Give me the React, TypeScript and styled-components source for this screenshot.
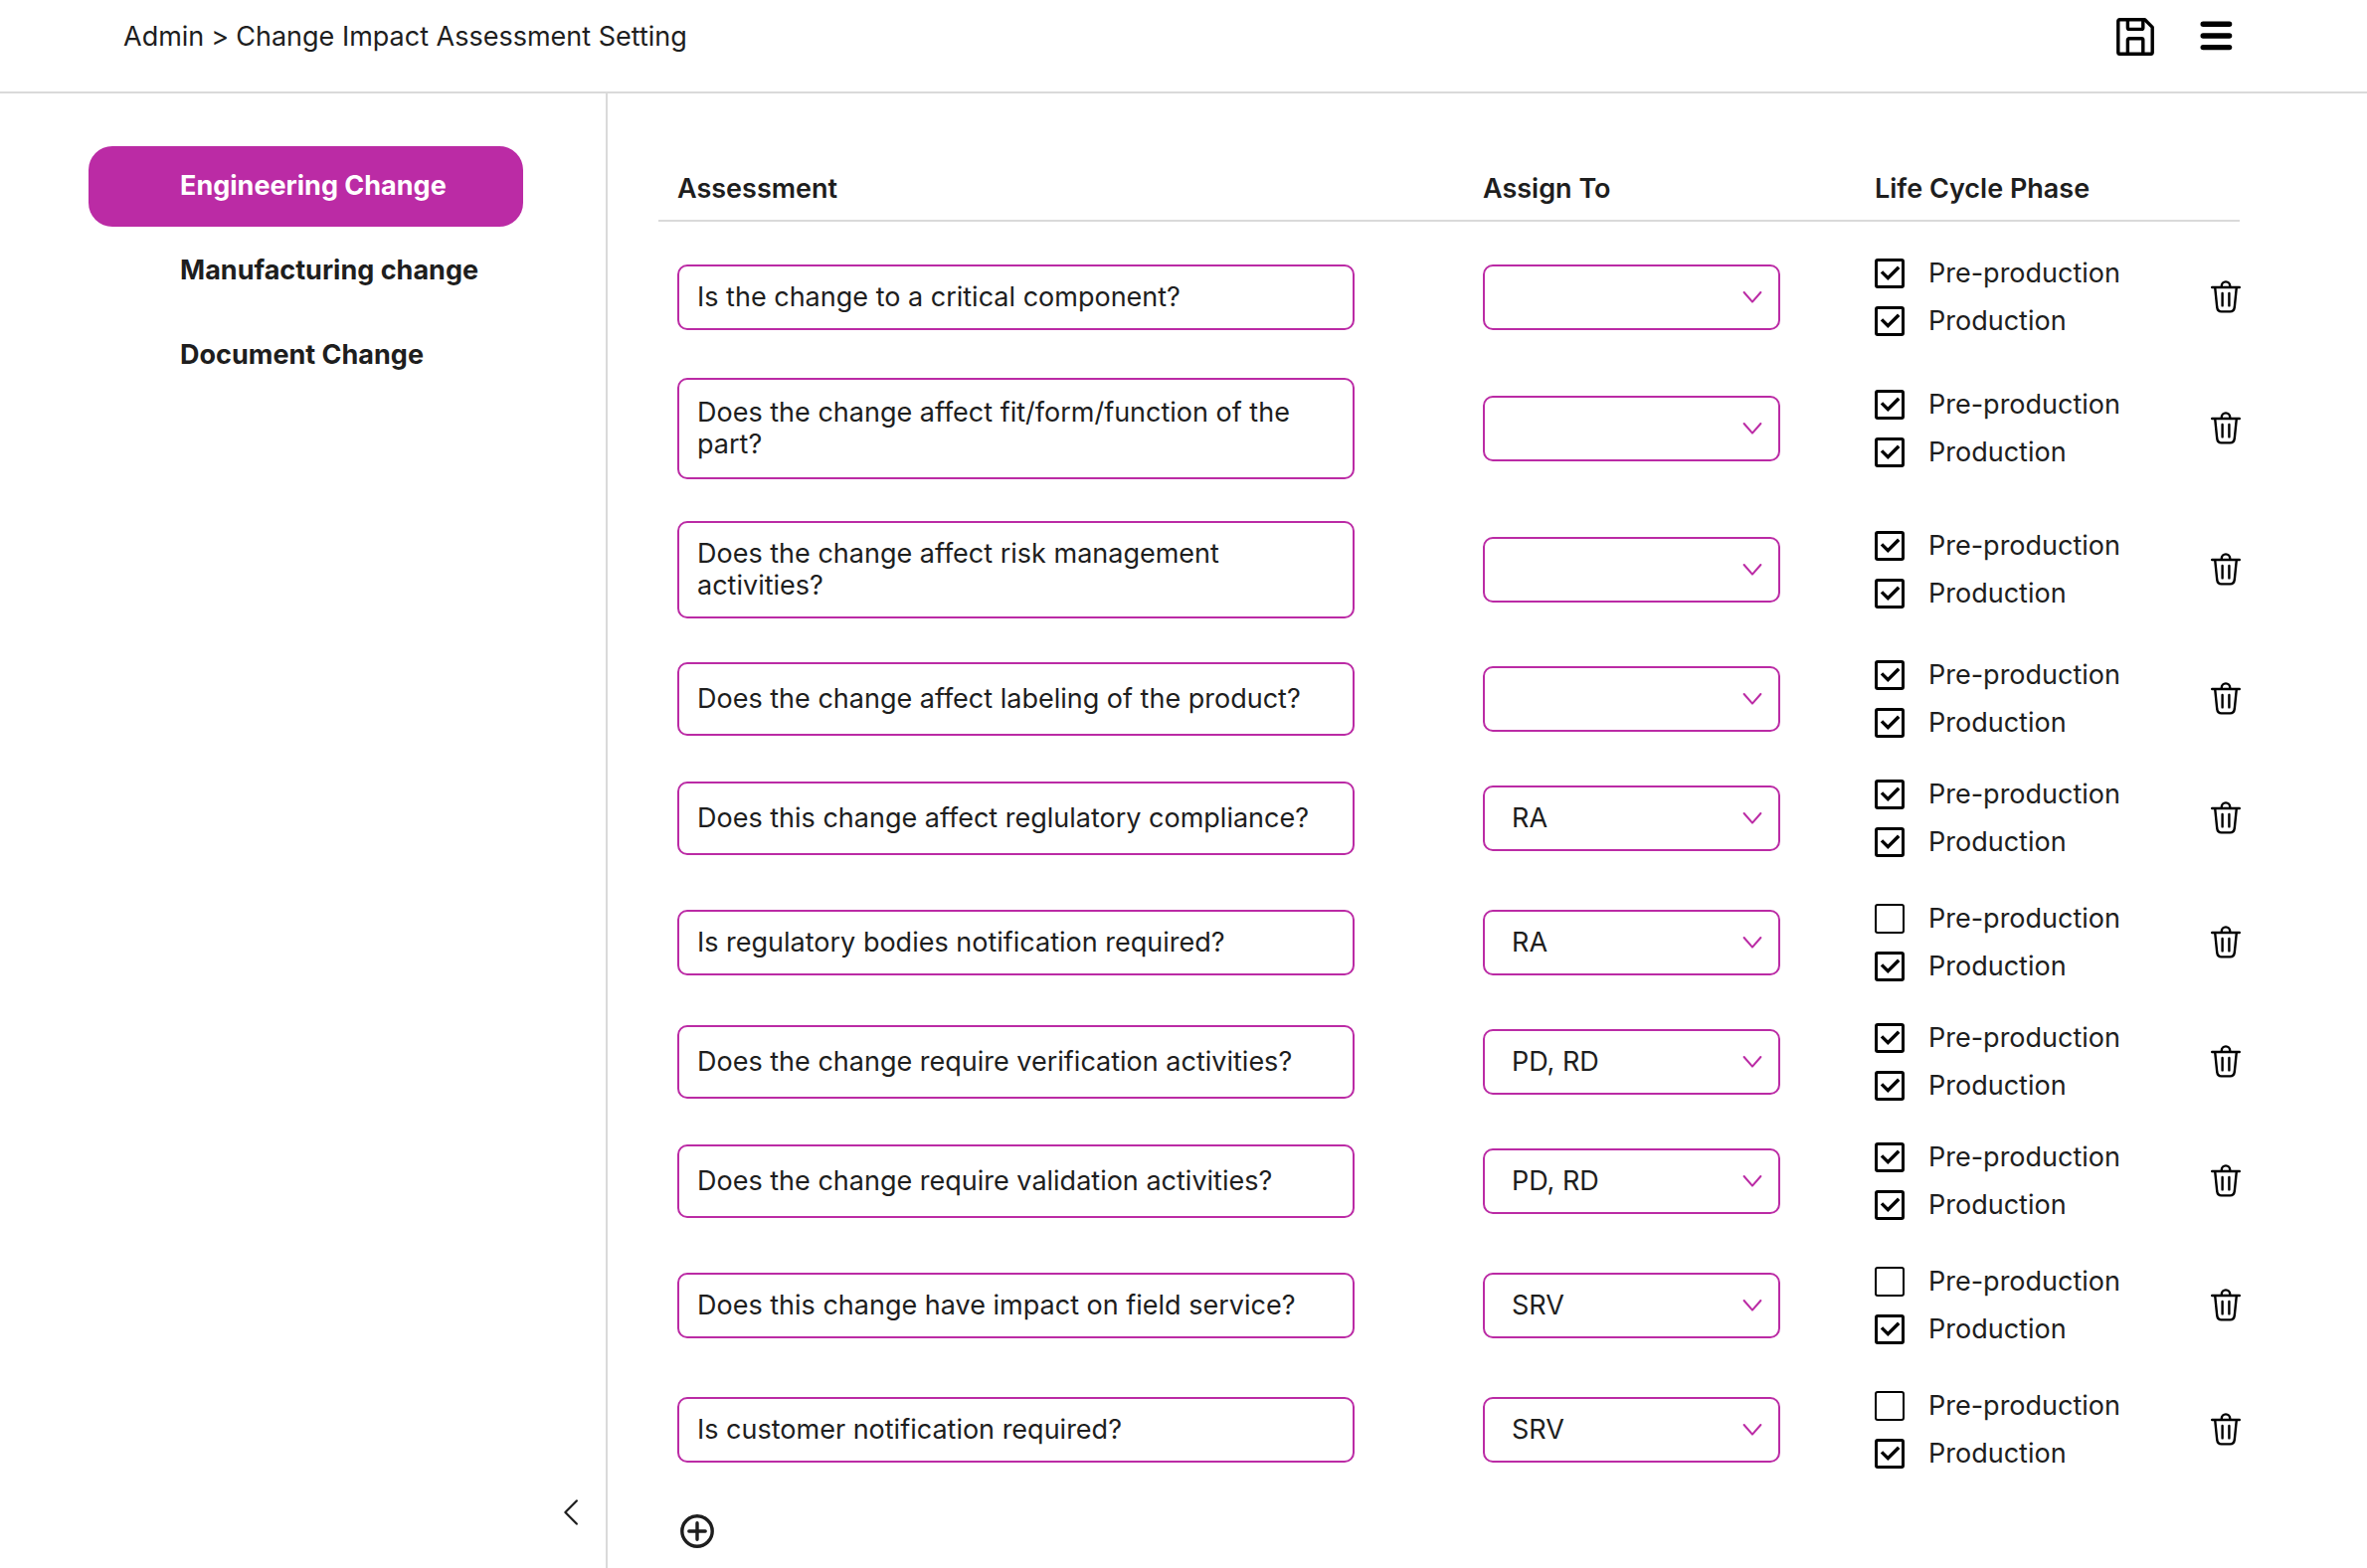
import React, { useState } from "react";
import styled, { createGlobalStyle } from "styled-components";

const ink = "#1e1e1e";
const accent = "#bb2ba5";
const line = "#dadada";

const GlobalStyle = createGlobalStyle`
  *, *::before, *::after { box-sizing: border-box; }
  body {
    margin: 0;
    background: #fff;
    color: ${ink};
    font-family: Inter, "Liberation Sans", sans-serif;
    font-size: 27px;
    line-height: 32px;
  }
  button, select, textarea, input { font: inherit; color: inherit; margin: 0; }
`;

const Page = styled.div`
  display: flex;
  flex-direction: column;
  min-height: 100vh;
`;

const TopBar = styled.header`
  display: flex;
  align-items: center;
  justify-content: space-between;
  padding: 18px 135px 36px 124px;
  border-bottom: 2px solid ${line};
`;

const Breadcrumb = styled.nav`
  display: flex;
  gap: 7px;
`;

const Crumb = styled.a`
  color: inherit;
  text-decoration: none;
`;

const Actions = styled.div`
  display: flex;
  align-items: center;
  gap: 46px;
`;

const IconButton = styled.button`
  display: flex;
  padding: 0;
  border: 0;
  background: none;
  cursor: pointer;

  svg { display: block; flex: none; }
`;

const Body = styled.div`
  display: flex;
  flex: 1;
`;

const Sidebar = styled.aside`
  display: flex;
  flex-direction: column;
  flex: none;
  justify-content: space-between;
  width: 611px;
  padding: 53px 28px 43px 89px;
  border-right: 2px solid ${line};
`;

const TabList = styled.nav`
  display: flex;
  flex-direction: column;
  gap: 4px;
  margin-right: 55px;
`;

const Tab = styled.button<{ $active: boolean }>`
  height: 81px;
  padding: 0 24px 2px 92px;
  border: 0;
  border-radius: 24px;
  background: ${(p) => (p.$active ? accent : "transparent")};
  color: ${(p) => (p.$active ? "#fff" : ink)};
  font-weight: 700;
  text-align: left;
  cursor: pointer;
`;

const Collapse = styled(IconButton)`
  align-self: flex-end;
`;

const Main = styled.main`
  flex: 1;
  min-width: 0;
  padding: 52px 128px 20px 51px;
`;

const Table = styled.table`
  width: 100%;
  border-collapse: collapse;
  table-layout: fixed;
`;

const Col = styled.col<{ $width?: number }>`
  width: ${(p) => (p.$width ? `${p.$width}px` : "auto")};
`;

const HeadCell = styled.th`
  height: 76px;
  padding: 12px 0 0;
  border-bottom: 2px solid ${line};
  font-weight: 600;
  text-align: left;

  &:first-child { padding-left: 19px; }
`;

const Row = styled.tr<{ $top: number }>`
  td { padding-top: ${(p) => p.$top}px; }
`;

const Cell = styled.td`
  padding: 0;
  vertical-align: middle;

  &:first-child { padding-left: 19px; padding-right: 129px; }
`;

const Question = styled.textarea<{ $pad: number }>`
  display: block;
  width: 100%;
  padding: ${(p) => p.$pad}px 18px;
  border: 2px solid ${accent};
  border-radius: 10px;
  background: #fff;
  overflow: hidden;
  resize: none;
  outline: none;
`;

const SelectBox = styled.div`
  position: relative;
  width: 299px;

  svg {
    position: absolute;
    top: 26px;
    right: 18px;
    pointer-events: none;
  }
`;

const Select = styled.select`
  display: block;
  width: 100%;
  height: 66px;
  padding: 0 48px 0 27px;
  border: 2px solid ${accent};
  border-radius: 10px;
  background: #fff;
  appearance: none;
  outline: none;
`;

const Phases = styled.div`
  display: flex;
  flex-direction: column;
  gap: 16px;
`;

const Phase = styled.label`
  display: flex;
  align-items: center;
  gap: 24px;
  height: 32px;
  cursor: pointer;
`;

const Tick = styled.span`
  display: grid;
  flex: none;

  input, svg { grid-area: 1 / 1; }
  svg { pointer-events: none; visibility: hidden; }
  input:checked + svg { visibility: visible; }
`;

const CheckInput = styled.input`
  width: 30px;
  height: 30px;
  border: 2px solid #000;
  border-radius: 3px;
  background: #fff;
  appearance: none;

  &:checked { border-width: 3px; }
`;

const AddRow = styled(IconButton)`
  margin: 45px 0 0 22px;
`;

type Item = {
  text: string;
  lines: number;
  pad: number;
  top: number;
  assign: string;
  pre: boolean;
};

const items: Item[] = [
  { text: "Is the change to a critical component?", lines: 1, pad: 15, top: 36, assign: "", pre: true },
  { text: "Does the change affect fit/form/function of the part?", lines: 2, pad: 17, top: 41, assign: "", pre: true },
  { text: "Does the change affect risk management activities?", lines: 2, pad: 15, top: 42, assign: "", pre: true },
  { text: "Does the change affect labeling of the product?", lines: 1, pad: 19, top: 41, assign: "", pre: true },
  { text: "Does this change affect reglulatory compliance?", lines: 1, pad: 19, top: 40, assign: "RA", pre: true },
  { text: "Is regulatory bodies notification required?", lines: 1, pad: 15, top: 45, assign: "RA", pre: false },
  { text: "Does the change require verification activities?", lines: 1, pad: 19, top: 40, assign: "PD, RD", pre: true },
  { text: "Does the change require validation activities?", lines: 1, pad: 19, top: 40, assign: "PD, RD", pre: true },
  { text: "Does this change have impact on field service?", lines: 1, pad: 15, top: 45, assign: "SRV", pre: false },
  { text: "Is customer notification required?", lines: 1, pad: 15, top: 45, assign: "SRV", pre: false },
];

const tabs = ["Engineering Change", "Manufacturing change", "Document Change"];

const SaveIcon = () => (
  <svg width="38" height="38" viewBox="0 0 38 38" fill="none" stroke="#000" strokeWidth="3.4" strokeLinejoin="round">
    <path d="M3.2 1.8H28.6L36.2 9.4V34.8a1.4 1.4 0 0 1-1.4 1.4H3.2a1.4 1.4 0 0 1-1.4-1.4V3.2A1.4 1.4 0 0 1 3.2 1.8Z" />
    <path d="M11.4 2V10a1.4 1.4 0 0 0 1.4 1.4H25.4A1.4 1.4 0 0 0 26.8 10V2" />
    <path d="M11.4 36V22.2a1.4 1.4 0 0 1 1.4-1.4H25.4a1.4 1.4 0 0 1 1.4 1.4V36" />
  </svg>
);

const MenuIcon = () => (
  <svg width="33" height="38" viewBox="0 0 33 38" stroke="#000" strokeWidth="5.4" strokeLinecap="round">
    <path d="M3.2 6.3H29.6M3.2 18H29.6M3.2 29.6H29.6" />
  </svg>
);

const ChevronDown = () => (
  <svg width="20" height="14" viewBox="0 0 20 14" fill="none" stroke={accent} strokeWidth="2" strokeLinecap="round" strokeLinejoin="round">
    <path d="M1.6 2L10 11.6L18.4 2" />
  </svg>
);

const ChevronLeft = () => (
  <svg width="14" height="26" viewBox="0 0 14 26" fill="none" stroke={ink} strokeWidth="2.2" strokeLinecap="round" strokeLinejoin="round">
    <path d="M12.8 1.4L1.4 13L12.8 24.6" />
  </svg>
);

const CheckIcon = () => (
  <svg width="30" height="30" viewBox="0 0 30 30" fill="none" stroke="#000" strokeWidth="3.4">
    <path d="M7 13.4L13.3 19.6L24.2 8.8" />
  </svg>
);

const TrashIcon = () => (
  <svg width="30" height="34" viewBox="0 0 30 34" fill="none" stroke="#000" strokeWidth="2.4" strokeLinecap="round" strokeLinejoin="round">
    <path d="M1.2 7H28.8" />
    <path d="M10.8 6.8V5.6a4.2 4.2 0 0 1 8.4 0V6.8" />
    <path d="M4.2 7.2L6.2 27Q6.8 31.4 10.6 31.4H19.4Q23.2 31.4 23.8 27L25.8 7.2" />
    <path d="M11.6 13V25.4M18.4 13V25.4" />
  </svg>
);

const PlusIcon = () => (
  <svg width="34" height="34" viewBox="0 0 34 34" fill="none" stroke={ink} strokeWidth="3.4" strokeLinecap="round">
    <circle cx="17" cy="17" r="15.2" />
    <path d="M17 8.8V25.2M8.8 17H25.2" />
  </svg>
);

export default function App() {
  const [active, setActive] = useState(tabs[0]);

  return (
    <>
      <GlobalStyle />
      <Page>
        <TopBar>
          <Breadcrumb aria-label="Breadcrumb">
            <Crumb href="#admin">Admin</Crumb>
            <span>&gt;</span>
            <span>Change Impact Assessment Setting</span>
          </Breadcrumb>
          <Actions>
            <IconButton type="button" aria-label="Save"><SaveIcon /></IconButton>
            <IconButton type="button" aria-label="Menu"><MenuIcon /></IconButton>
          </Actions>
        </TopBar>
        <Body>
          <Sidebar>
            <TabList aria-label="Change types">
              {tabs.map((tab) => (
                <Tab key={tab} type="button" $active={tab === active} onClick={() => setActive(tab)}>
                  {tab}
                </Tab>
              ))}
            </TabList>
            <Collapse type="button" aria-label="Collapse sidebar"><ChevronLeft /></Collapse>
          </Sidebar>
          <Main>
            <Table>
              <colgroup>
                <Col />
                <Col $width={394} />
                <Col $width={338} />
                <Col $width={29} />
              </colgroup>
              <thead>
                <tr>
                  <HeadCell scope="col" id="assessment">Assessment</HeadCell>
                  <HeadCell scope="col" id="assign">Assign To</HeadCell>
                  <HeadCell scope="col" colSpan={2}>Life Cycle Phase</HeadCell>
                </tr>
              </thead>
              <tbody>
                {items.map((item) => (
                  <Row key={item.text} $top={item.top}>
                    <Cell>
                      <Question
                        aria-labelledby="assessment"
                        rows={item.lines}
                        $pad={item.pad}
                        spellCheck={false}
                        defaultValue={item.text}
                      />
                    </Cell>
                    <Cell>
                      <SelectBox>
                        <Select aria-labelledby="assign" defaultValue={item.assign}>
                          <option value="" />
                          <option>RA</option>
                          <option>PD, RD</option>
                          <option>SRV</option>
                        </Select>
                        <ChevronDown />
                      </SelectBox>
                    </Cell>
                    <Cell>
                      <Phases>
                        <Phase>
                          <Tick><CheckInput type="checkbox" defaultChecked={item.pre} /><CheckIcon /></Tick>
                          Pre-production
                        </Phase>
                        <Phase>
                          <Tick><CheckInput type="checkbox" defaultChecked /><CheckIcon /></Tick>
                          Production
                        </Phase>
                      </Phases>
                    </Cell>
                    <Cell>
                      <IconButton type="button" aria-label="Delete assessment"><TrashIcon /></IconButton>
                    </Cell>
                  </Row>
                ))}
              </tbody>
            </Table>
            <AddRow type="button" aria-label="Add assessment"><PlusIcon /></AddRow>
          </Main>
        </Body>
      </Page>
    </>
  );
}
